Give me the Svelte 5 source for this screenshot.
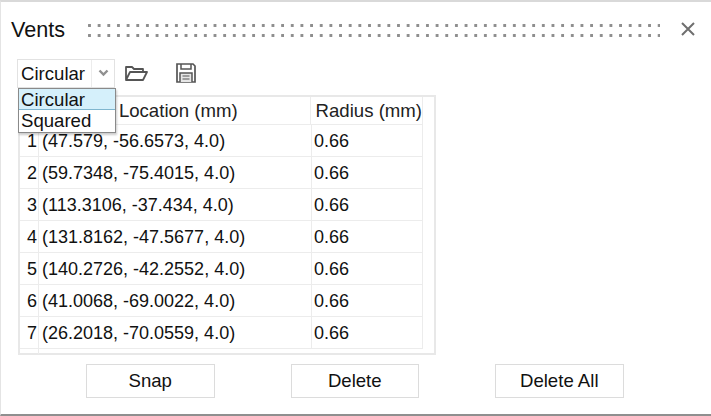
<script>
	const vents = [
		['(47.579, -56.6573, 4.0)', '0.66'],
		['(59.7348, -75.4015, 4.0)', '0.66'],
		['(113.3106, -37.434, 4.0)', '0.66'],
		['(131.8162, -47.5677, 4.0)', '0.66'],
		['(140.2726, -42.2552, 4.0)', '0.66'],
		['(41.0068, -69.0022, 4.0)', '0.66'],
		['(26.2018, -70.0559, 4.0)', '0.66']
	];
</script>

<div class="dialog">
	<header>
		<h1>Vents</h1>
		<div class="grip"></div>
		<svg class="close" width="16" height="16" viewBox="0 0 16 16">
			<path d="M2 2 L14 14 M14 2 L2 14" stroke="#6f6f6f" stroke-width="2" fill="none" />
		</svg>
	</header>

	<div class="toolbar">
		<div class="combo">
			<span class="value">Circular</span>
			<span class="arrow">
				<svg width="11" height="8" viewBox="0 0 11 8">
					<path d="M1.5 1.5 L5.5 5.5 L9.5 1.5" stroke="#909090" stroke-width="2.4" fill="none" />
				</svg>
			</span>
			<ul class="menu">
				<li class="selected">Circular</li>
				<li>Squared</li>
			</ul>
		</div>
		<svg class="open" width="24" height="18" viewBox="0 0 24 18">
			<path
				d="M2 16 V3 H8 L10 5 H19 V8 M2 16 L6 8 H23 L19 16 Z"
				stroke="#555"
				stroke-width="1.8"
				fill="none"
				stroke-linejoin="round"
			/>
		</svg>
		<svg class="save" width="22" height="22" viewBox="0 0 22 22">
			<path d="M2 2 H18 L20 4 V20 H2 Z" stroke="#555" stroke-width="1.7" fill="none" />
			<path d="M6 2 V7 H16 V2" stroke="#555" stroke-width="1.5" fill="none" />
			<path d="M5 20 V11 H17 V20" stroke="#555" stroke-width="1.5" fill="#e6e6e6" />
			<path d="M7.5 14 H14.5 M7.5 17 H14.5" stroke="#555" stroke-width="1.2" fill="none" />
		</svg>
	</div>

	<div class="table">
		<div class="row head">
			<div class="idx"></div>
			<div class="loc">Location (mm)</div>
			<div class="rad">Radius (mm)</div>
		</div>
		{#each vents as [location, radius], i}
			<div class="row">
				<div class="idx">{i + 1}</div>
				<div class="loc">{location}</div>
				<div class="rad">{radius}</div>
			</div>
		{/each}
		<div class="row tail"><div class="idx"></div></div>
	</div>

	<div class="actions">
		<button>Snap</button>
		<button>Delete</button>
		<button>Delete All</button>
	</div>
</div>

<style>
	:global(body) {
		margin: 0;
		background: #fff;
	}

	.dialog {
		box-sizing: border-box;
		width: 711px;
		height: 416px;
		padding: 0 0 0 1px;
		background: #fff;
		border-top: 2px solid #d9d9d9;
		border-left: 1px solid #e4e4e4;
		border-bottom: 2px solid #8f8f8f;
		font-family: 'Liberation Sans', Arial, sans-serif;
		font-size: 18.6px;
		color: #111;
		overflow: hidden;
	}

	header {
		display: flex;
		align-items: center;
		height: 54px;
		padding: 0 15px 0 8px;
	}

	h1 {
		margin: 2px 0 0 1px;
		width: 77px;
		font-size: 21.6px;
		font-weight: 400;
	}

	.grip {
		width: 572px;
		height: 14px;
		margin-top: 3px;
		background-image: radial-gradient(circle at 1.5px 1.5px, #8e8e8e 1.4px, transparent 1.7px);
		background-size: 9.66px 10px;
		background-repeat: repeat;
	}

	.close {
		margin-left: auto;
	}

	.toolbar {
		display: flex;
		align-items: center;
		box-sizing: border-box;
		height: 39px;
		padding: 0 0 5px 15px;
	}

	.combo {
		position: relative;
		display: flex;
		box-sizing: border-box;
		width: 98px;
		height: 29px;
		border: 1px solid #e2e2e2;
	}

	.value {
		width: 70px;
		padding-left: 3px;
		line-height: 28px;
		border-right: 1px solid #ececec;
		white-space: nowrap;
	}

	.arrow {
		display: flex;
		flex: 1;
		align-items: center;
		justify-content: center;
	}

	.menu {
		position: absolute;
		top: 28px;
		left: 0;
		z-index: 2;
		box-sizing: border-box;
		width: 98px;
		margin: 0;
		padding: 0;
		list-style: none;
		background: #fff;
		border: 1px solid #8a8a8a;
		box-shadow: 1px 2px 2px rgba(0, 0, 0, 0.2);
	}

	.menu li {
		box-sizing: border-box;
		height: 21.5px;
		padding-left: 2px;
		line-height: 21px;
	}

	.menu .selected {
		background: #d5f0fb;
		border-bottom: 1px solid #7fb6cf;
	}

	.open {
		margin-left: 9px;
	}

	.save {
		margin-left: 27px;
	}

	.table {
		box-sizing: border-box;
		width: 418px;
		height: 260px;
		margin-left: 16px;
		border: 2px solid #e8e8e8;
	}

	.row {
		display: flex;
		box-sizing: border-box;
		width: 403px;
		height: 32px;
		font-size: 18px;
		line-height: 33px;
		border-bottom: 1px solid #ececec;
		white-space: nowrap;
	}

	.row.head {
		height: 28px;
		font-size: 18.6px;
		line-height: 27px;
		color: #222;
	}

	.row.tail {
		width: 20px;
		height: 5px;
		border-bottom: none;
	}

	.idx {
		box-sizing: border-box;
		width: 19px;
		padding-right: 1px;
		text-align: right;
		border-right: 1px solid #ececec;
	}

	.loc {
		box-sizing: border-box;
		width: 273px;
		padding-left: 3px;
		border-right: 1px solid #ececec;
	}

	.head .loc {
		padding-left: 80px;
	}

	.rad {
		box-sizing: border-box;
		flex: 1;
		padding-left: 2px;
		border-right: 1px solid #ececec;
	}

	.head .rad {
		padding-left: 5px;
	}

	.actions {
		display: flex;
		gap: 76px;
		margin: 9px 0 0 84px;
	}

	button {
		width: 128.5px;
		height: 34px;
		padding: 0;
		font: inherit;
		color: inherit;
		background: #fff;
		border: 1px solid #dcdcdc;
		border-radius: 0;
	}
</style>
